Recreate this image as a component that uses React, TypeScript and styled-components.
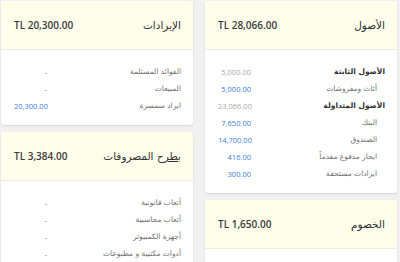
import styled, { createGlobalStyle } from "styled-components";

type Row = {
  label: string;
  value: string;
  kind?: "group" | "item" | "plain";
};

type CardData = {
  title: string;
  titleLead?: string;
  amount: string;
  rows: Row[];
};

const LEFT: CardData[] = [
  {
    title: "الإيرادات",
    amount: "TL 20,300.00",
    rows: [
      { label: "الفوائد المستلمة", value: "-" },
      { label: "المبيعات", value: "-" },
      { label: "ايراد سمسرة", value: "20,300.00" },
    ],
  },
  {
    titleLead: "بطرح",
    title: "المصروفات",
    amount: "TL 3,384.00",
    rows: [
      { label: "أتعاب قانونية", value: "-" },
      { label: "أتعاب محاسبية", value: "-" },
      { label: "أجهزة الكمبيوتر", value: "-" },
      { label: "أدوات مكتبية و مطبوعات", value: "-" },
    ],
  },
];

const RIGHT: CardData[] = [
  {
    title: "الأصول",
    amount: "TL 28,066.00",
    rows: [
      { label: "الأصول الثابتة", value: "5,000.00", kind: "group" },
      { label: "أثاث ومفروشات", value: "5,000.00", kind: "item" },
      { label: "الأصول المتداولة", value: "23,066.00", kind: "group" },
      { label: "البنك", value: "7,650.00", kind: "item" },
      { label: "الصندوق", value: "14,700.00", kind: "item" },
      { label: "ايجار مدفوع مقدماً", value: "416.00", kind: "item" },
      { label: "ايرادات مستحقة", value: "300.00", kind: "item" },
    ],
  },
  {
    title: "الخصوم",
    amount: "TL 1,650.00",
    rows: [],
  },
];

function Card({ data }: { data: CardData }) {
  return (
    <Panel dir="rtl">
      <Header>
        <Title>
          {data.titleLead && (
            <>
              <Lead>{data.titleLead}</Lead>{" "}
            </>
          )}
          {data.title}
        </Title>
        <Amount dir="ltr">{data.amount}</Amount>
      </Header>
      <Body>
        {data.rows.map((r) => (
          <Line key={r.label}>
            <Label $kind={r.kind ?? "plain"}>{r.label}</Label>
            <Value $kind={r.kind ?? "plain"}>{r.value}</Value>
          </Line>
        ))}
      </Body>
    </Panel>
  );
}

export default function App() {
  return (
    <>
      <GlobalStyle />
      <Page>
        <Column>
          {LEFT.map((c) => (
            <Card key={c.title} data={c} />
          ))}
        </Column>
        <Column>
          {RIGHT.map((c) => (
            <Card key={c.title} data={c} />
          ))}
        </Column>
      </Page>
    </>
  );
}

const GlobalStyle = createGlobalStyle`
  html, body {
    margin: 0;
    background: #f1f1f1;
    font-family: "Open Sans", "DejaVu Sans", sans-serif;
    color: #333;
  }
`;

const Page = styled.div`
  display: grid;
  grid-template-columns: 192px 192px;
  column-gap: 12px;
  padding: 1px 0 0 1px;
  height: 262px;
  overflow: hidden;
`;

const Column = styled.div`
  display: flex;
  flex-direction: column;
  gap: 7px;
`;

const Panel = styled.div`
  background: #fff;
  border-radius: 3px;
  box-shadow: 0 1px 2px rgba(0, 0, 0, 0.12);
  overflow: hidden;
`;

const Header = styled.div`
  height: 48px;
  display: flex;
  align-items: center;
  justify-content: space-between;
  padding: 0 12px 0 13px;
  background: #fefeea;
  border-bottom: 1px solid #ededdf;
`;

const Title = styled.div`
  font-family: "DejaVu Sans", sans-serif;
  font-size: 10.5px;
  color: #333;
`;

const Lead = styled.span`
  text-decoration: underline;
`;

const Amount = styled.div`
  font-size: 10px;
  font-weight: 600;
  color: #3a3a3a;
`;

const Body = styled.div`
  padding: 13px 12px 11px 13px;
`;

const Line = styled.div`
  height: 17px;
  display: flex;
  align-items: center;
  justify-content: space-between;
`;

const Label = styled.span<{ $kind: string }>`
  font-family: "DejaVu Sans", sans-serif;
  font-size: 7.5px;
  font-weight: ${({ $kind }) => ($kind === "group" ? 700 : 400)};
  color: ${({ $kind }) => ($kind === "group" ? "#333" : "#707070")};
  padding-right: ${({ $kind }) => ($kind === "item" ? "8px" : "0")};
`;

const Value = styled.span<{ $kind: string }>`
  width: 33px;
  text-align: right;
  direction: ltr;
  font-size: 7.5px;
  color: ${({ $kind }) => ($kind === "group" ? "#aaa" : "#3d7fd6")};
`;
